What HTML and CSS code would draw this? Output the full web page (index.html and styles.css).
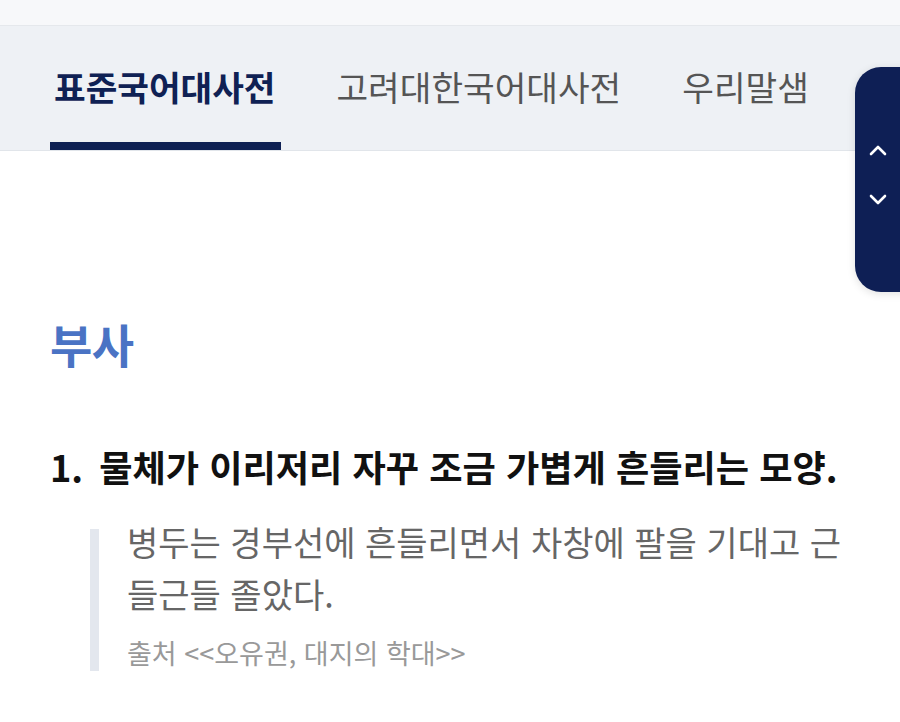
FILE: index.html
```html
<!DOCTYPE html>
<html lang="ko">
<head>
<meta charset="utf-8">
<link rel="stylesheet" href="styles.css">
</head>
<body>
<div class="topbar"></div>
<nav class="tabs">
  <div class="tab active">표준국어대사전</div>
  <div class="tab">고려대한국어대사전</div>
  <div class="tab">우리말샘</div>
</nav>
<div class="float-nav">
  <svg class="chev" viewBox="0 0 24 24" width="24" height="24"><path d="M5 15 L12 8 L19 15" fill="none" stroke="#fff" stroke-width="2.6" stroke-linecap="round" stroke-linejoin="round"/></svg>
  <svg class="chev" viewBox="0 0 24 24" width="24" height="24"><path d="M5 9 L12 16 L19 9" fill="none" stroke="#fff" stroke-width="2.6" stroke-linecap="round" stroke-linejoin="round"/></svg>
</div>
<main class="content">
  <h2 class="pos">부사</h2>
  <div class="sense">
    <p class="def"><span class="num">1.</span>물체가 이리저리 자꾸 조금 가볍게 흔들리는 모양.</p>
    <blockquote class="example">
      <p class="ex-text">병두는 경부선에 흔들리면서 차창에 팔을 기대고 근들근들 졸았다.</p>
      <p class="ex-src">출처 &lt;&lt;오유권, 대지의 학대&gt;&gt;</p>
    </blockquote>
  </div>
</main>
</body>
</html>
```
FILE: styles.css
```css
* { box-sizing: border-box; }
html, body { margin: 0; padding: 0; }
body {
  width: 900px;
  height: 722px;
  overflow: hidden;
  background: #ffffff;
  font-family: "Noto Sans CJK KR", "Noto Sans", sans-serif;
  position: relative;
}
.topbar {
  height: 26px;
  background: #f7f8fa;
  border-bottom: 1px solid #e5e8ec;
}
.tabs {
  height: 125px;
  background: #eef1f5;
  border-bottom: 1px solid #e1e5ea;
  display: flex;
  padding-left: 50px;
  gap: 51px;
}
.tab {
  display: flex;
  align-items: center;
  padding: 4px 6px 0 4px;
  font-size: 34.4px;
  color: #555555;
  border-bottom: 8px solid transparent;
}
.tab.active {
  color: #0f2154;
  font-weight: 700;
  border-bottom-color: #0f2154;
}
.float-nav {
  position: absolute;
  left: 855px;
  top: 67px;
  width: 70px;
  height: 225px;
  background: #0e1f55;
  border-radius: 26px 0 0 26px;
  box-shadow: 0 2px 8px rgba(0,0,0,0.12);
  display: flex;
  flex-direction: column;
  align-items: flex-start;
  padding-left: 11px;
  padding-top: 72px;
  gap: 24px;
}
.chev { display: block; }
.content {
  padding: 0 50px;
}
.pos {
  margin: 0;
  padding-top: 162px;
  font-size: 46px;
  font-weight: 700;
  color: #4a73c4;
  letter-spacing: -0.5px;
  line-height: 60px;
}
.def {
  margin: 0;
  margin-top: 70px;
  font-size: 36.2px;
  font-weight: 700;
  color: #111111;
  line-height: 46px;
}
.num { margin-right: 16px; }
.example {
  display: flow-root;
  margin: 40px 0 0 40px;
  padding-left: 28px;
  border-left: 9px solid #e3e7ee;
}
.ex-text {
  margin: -13px 0 0;
  font-size: 34px;
  line-height: 52px;
  color: #666666;
}
.ex-src {
  margin: 15px 0 0;
  font-size: 27px;
  line-height: 36px;
  color: #999999;
}
```
